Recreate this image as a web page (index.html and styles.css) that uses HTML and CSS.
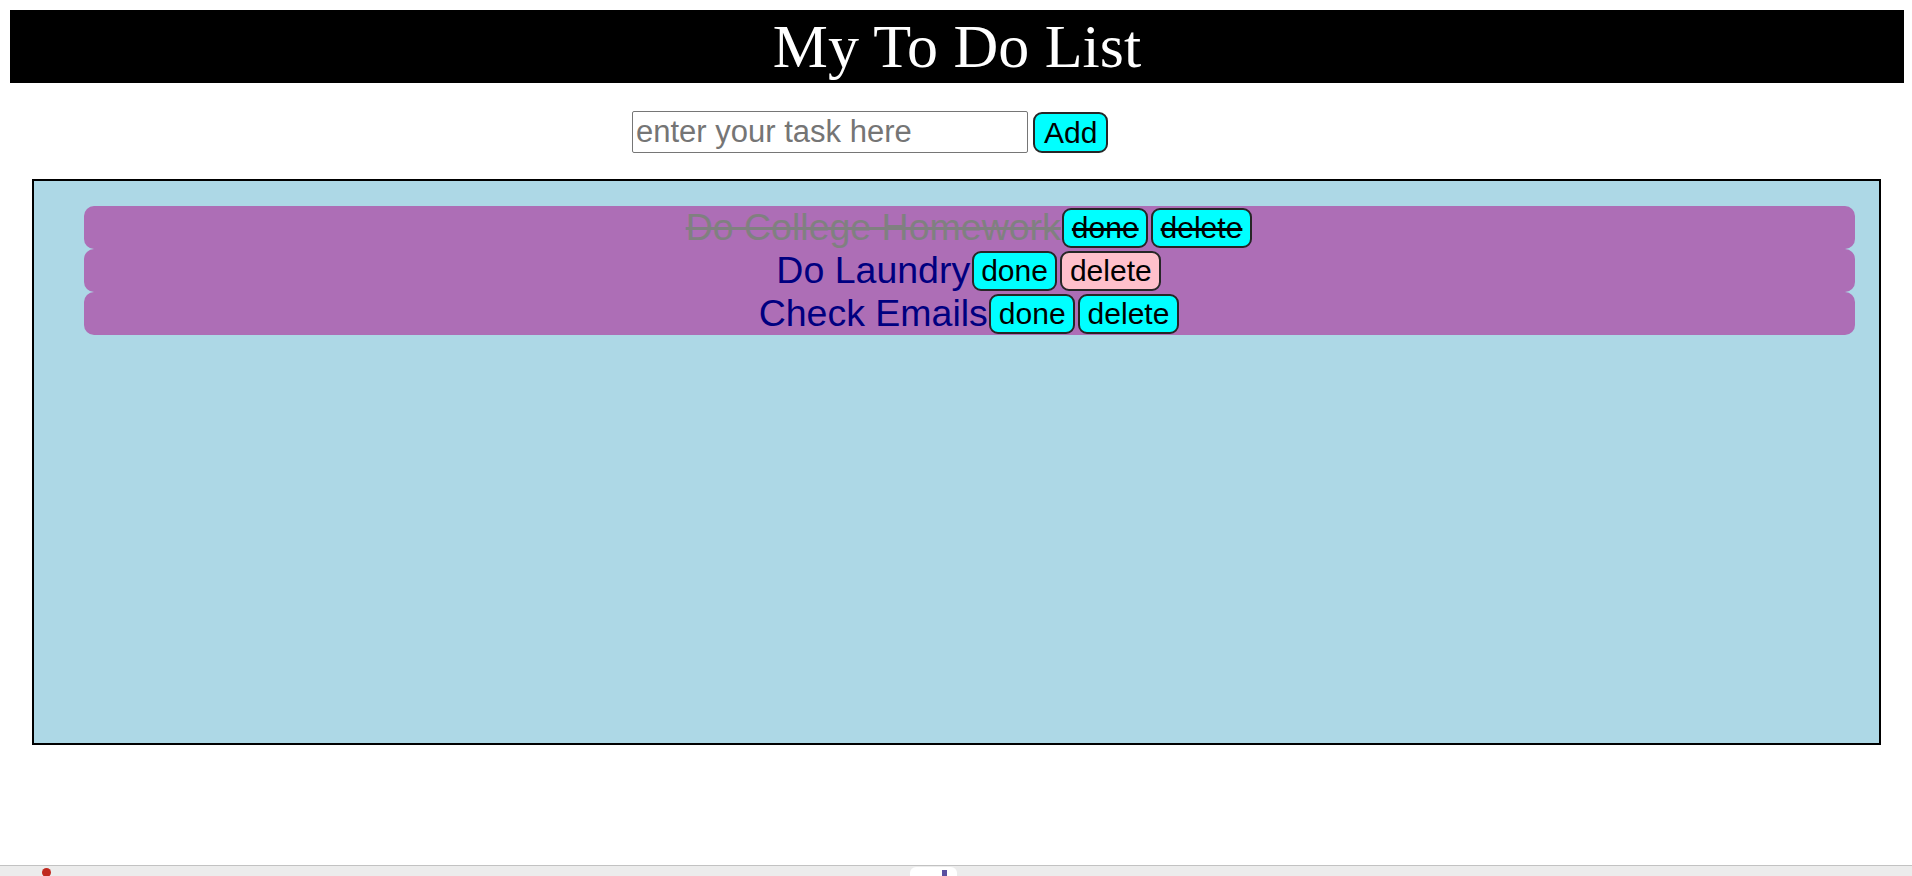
FILE: index.html
```html
<!DOCTYPE html>
<html lang="en">
<head>
<meta charset="utf-8">
<title>My To Do List</title>
<link rel="stylesheet" href="styles.css">
</head>
<body>
<div class="page">
  <h1 class="title">My To Do List</h1>
  <form class="entry">
    <input class="entry-input" type="text" placeholder="enter your task here">
    <button class="btn add-btn" type="button">Add</button>
  </form>
  <div class="board">
    <ul class="tasks">
      <li class="task is-done">
        <span class="task-text">Do College Homework</span>
        <button class="btn task-btn" type="button">done</button>
        <button class="btn task-btn" type="button">delete</button>
      </li>
      <li class="task">
        <span class="task-text">Do Laundry</span>
        <button class="btn task-btn" type="button">done</button>
        <button class="btn task-btn btn-pink" type="button">delete</button>
      </li>
      <li class="task">
        <span class="task-text">Check Emails</span>
        <button class="btn task-btn" type="button">done</button>
        <button class="btn task-btn" type="button">delete</button>
      </li>
    </ul>
  </div>
</div>
<div class="chrome-bar">
  <span class="chrome-dot"></span>
  <span class="chrome-tab"><span class="chrome-tab-mark"></span></span>
</div>
</body>
</html>
```

FILE: styles.css
```css
html, body {
  margin: 0;
  padding: 0;
  background: #ffffff;
}

.page {
  padding: 10px 8px 0 10px;
  font-family: "Liberation Sans", Arial, sans-serif;
}

.title {
  margin: 0;
  height: 73px;
  background: #000000;
  color: #ffffff;
  font-family: "Liberation Serif", "Times New Roman", serif;
  font-weight: normal;
  font-size: 62px;
  line-height: 73px;
  text-align: center;
}

.entry {
  display: flex;
  align-items: flex-end;
  gap: 5px;
  margin: 28px 0 0 622px;
}

.entry-input {
  box-sizing: border-box;
  width: 396px;
  height: 42px;
  margin: 0;
  padding: 1px 3px;
  border: 1px solid #767676;
  border-radius: 2px;
  font-family: "Liberation Sans", Arial, sans-serif;
  font-size: 31px;
  color: #000;
  background: #fff;
}

.entry-input::placeholder {
  color: #757575;
}

.btn {
  box-sizing: border-box;
  margin: 0;
  border: 2px solid #262626;
  border-radius: 9px;
  background: #00ffff;
  color: #000;
  font-family: "Liberation Sans", Arial, sans-serif;
  font-size: 30px;
  line-height: 34px;
  cursor: pointer;
}

.add-btn {
  height: 41px;
  padding: 1px 9px;
}

.board {
  box-sizing: border-box;
  height: 566px;
  margin: 26px 23px 0 22px;
  padding: 25px 24px 0 50px;
  border: 2px solid #000000;
  background: #add8e6;
}

.tasks {
  margin: 0;
  padding: 0;
  list-style: none;
}

.task {
  display: flex;
  justify-content: center;
  align-items: center;
  height: 43px;
  border-radius: 10px;
  background: #ad6eb6;
  font-size: 37.5px;
  color: #000080;
}

.task-text {
  line-height: 43px;
}

.task-btn {
  height: 40px;
  padding: 1px 7.5px;
  margin: 0 1.5px;
}

.btn-pink {
  background: #ffc0cb;
}

.is-done .task-text {
  color: #808080;
  text-decoration: line-through;
}

.is-done .task-btn {
  text-decoration: line-through;
}

.chrome-bar {
  position: fixed;
  left: 0;
  right: 0;
  bottom: 0;
  height: 10px;
  border-top: 1px solid #c2c2c2;
  background: #ececec;
  overflow: hidden;
}

.chrome-dot {
  position: absolute;
  left: 42px;
  top: 2px;
  width: 9px;
  height: 9px;
  border-radius: 50%;
  background: #c0281e;
}

.chrome-tab {
  position: absolute;
  left: 910px;
  top: 1px;
  width: 47px;
  height: 14px;
  border-radius: 6px 6px 0 0;
  background: #ffffff;
}

.chrome-tab-mark {
  position: absolute;
  left: 32px;
  top: 3px;
  width: 5px;
  height: 10px;
  background: #5a4fa0;
}
```
